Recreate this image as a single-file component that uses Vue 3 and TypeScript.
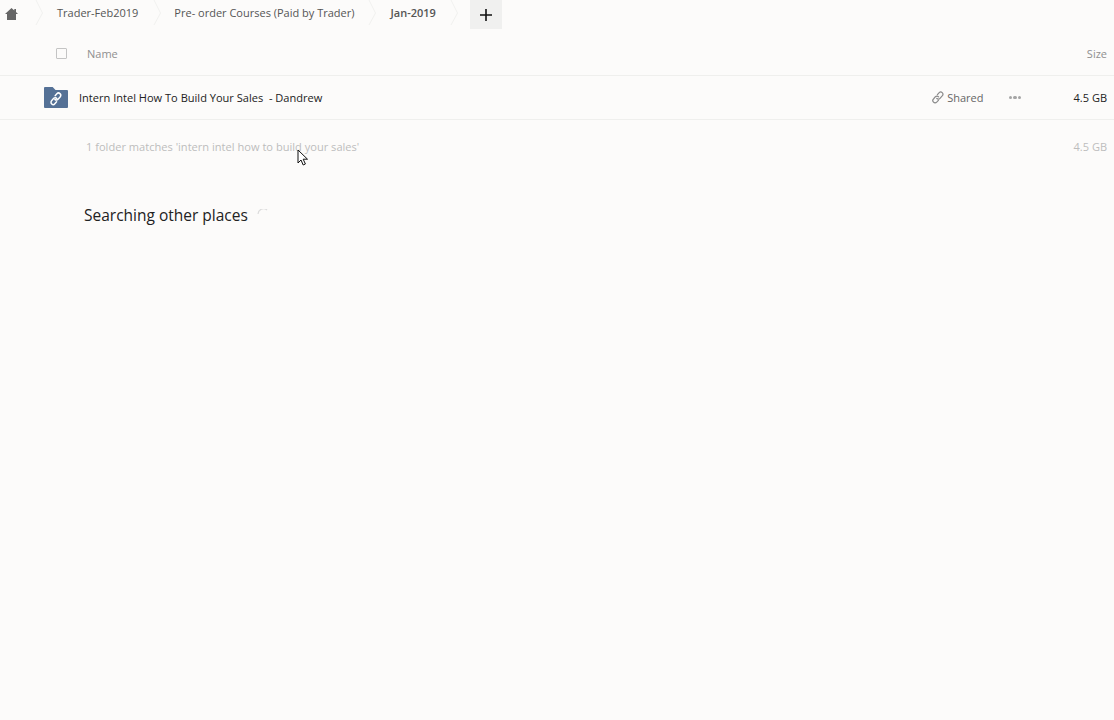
<script setup lang="ts">
const crumbs = [
  { label: 'Trader-Feb2019', cls: 'c1' },
  { label: 'Pre- order Courses (Paid by Trader)', cls: 'c2' },
  { label: 'Jan-2019', cls: 'c3' },
]
</script>

<template>
  <div class="page">
    <nav class="crumbs">
      <div class="home">
        <svg width="13" height="12" viewBox="0 0 13 12"><path d="M6.500 0 0 6h2v6h9V6h2l-2-1.900V1H9.300v1.500z" fill="#666" /></svg>
      </div>
      <svg class="chev" width="10" height="30" viewBox="0 0 10 30"><path d="M1 0 7.500 13 1 25" fill="none" stroke="#f1f1ef" /></svg>
      <template v-for="c in crumbs" :key="c.label">
        <span class="crumb" :class="c.cls">{{ c.label }}</span>
        <svg class="chev" width="10" height="30" viewBox="0 0 10 30"><path d="M1 0 7.500 13 1 25" fill="none" stroke="#f1f1ef" /></svg>
      </template>
      <div class="plus">
        <svg width="12" height="12" viewBox="0 0 12 12"><path d="M6 0v12M0 6h12" stroke="#111" stroke-width="1.6" /></svg>
      </div>
    </nav>

    <div class="head">
      <span class="check"></span>
      <span class="head-name">Name</span>
      <span class="head-size">Size</span>
    </div>

    <div class="row">
      <svg class="folder" width="24" height="21" viewBox="0 0 25 21" preserveAspectRatio="none">
        <path d="M1 0h8l3 3h12a1 1 0 0 1 1 1v16a1 1 0 0 1-1 1H1a1 1 0 0 1-1-1V1a1 1 0 0 1 1-1z" fill="#557196" />
        <g fill="none" stroke="#fff" stroke-width="1.500" stroke-linecap="round">
          <path d="M11.600 8.800l1.800-2a2.300 2.300 0 0 1 3.400 3.100l-2.200 2.400a2.300 2.300 0 0 1-3.300.1" />
          <path d="M13.400 11.400a2.300 2.300 0 0 0-3.300-.1l-2.200 2.400a2.300 2.300 0 0 0 3.400 3.100l1.800-2" />
        </g>
      </svg>
      <span class="file-name">Intern Intel How To Build Your Sales&nbsp; - Dandrew</span>
      <span class="shared">
        <svg width="12" height="13" viewBox="0 0 12 13">
          <g fill="none" stroke="#8a8a8a" stroke-width="1.200" stroke-linecap="round">
            <path d="M5.400 3.600 7.200 1.600a2.200 2.200 0 0 1 3.200 3L8 7.400a2.200 2.200 0 0 1-3.200.1" />
            <path d="M6.600 5.800a2.200 2.200 0 0 0-3.200-.1L1.500 8a2.200 2.200 0 0 0 3.200 3.200l1.700-1.900" />
          </g>
        </svg>
        Shared
      </span>
      <span class="dots"><i></i><i></i><i></i></span>
      <span class="file-size">4.5 GB</span>
    </div>

    <div class="summary">
      <span class="sum-text">1 folder matches 'intern intel how to build your sales'</span>
      <span class="sum-size">4.5 GB</span>
    </div>

    <div class="other">
      <span>Searching other places</span>
      <svg width="11" height="7" viewBox="0 0 11 7"><path d="M1 5A5.500 5.500 0 0 1 10 1" fill="none" stroke="#dcdcdc" stroke-width="1.200" /></svg>
    </div>

    <svg class="cursor" width="12" height="18" viewBox="0 0 12 18">
      <path d="M1 1v13l3-3 2.200 5 2.200-1-2.200-4.800h4.300z" fill="#fff" stroke="#111" stroke-width="1" />
    </svg>
  </div>
</template>

<style scoped>
.page {
  position: relative;
  width: 1114px;
  height: 720px;
  overflow: hidden;
  background: #fcfbfa;
  font-family: "Open Sans", "Noto Sans", sans-serif;
  font-size: 11px;
  color: #222;
}
.crumbs {
  display: flex;
  align-items: flex-start;
  height: 30px;
}
.home {
  width: 35px;
  padding: 8px 0 0 5px;
  box-sizing: border-box;
}
.chev { flex: none; }
.crumb {
  line-height: 26px;
  color: #555;
  font-size: 11px;
  white-space: nowrap;
  margin-right: 14px;
}
.c1 { margin-left: 12px; margin-right: 15px; }
.c2 { margin-left: 11px; }
.c3 { margin-left: 12px; font-weight: 600; color: #555; }
.plus {
  width: 32px;
  height: 29px;
  margin-left: 10px;
  background: #f0f0ef;
  display: flex;
  align-items: center;
  justify-content: center;
}
.head {
  display: flex;
  align-items: center;
  height: 45px;
  border-bottom: 1px solid #efefed;
  color: #8f8f8f;
}
.check {
  width: 9px;
  height: 9px;
  margin-left: 56px;
  margin-top: 2px;
  border: 1px solid #c4c4c4;
  border-radius: 1px;
}
.head-name { margin-left: 20px; margin-top: 1px; }
.head-size { margin-left: auto; margin-right: 7px; margin-top: 1px; }
.row {
  display: flex;
  align-items: center;
  height: 43px;
  border-bottom: 1px solid #efefed;
}
.folder { margin-left: 44px; flex: none; }
.file-name { margin-left: 11px; color: #222; white-space: nowrap; font-size: 11.05px; }
.shared {
  margin-left: auto;
  display: flex;
  align-items: center;
  gap: 3px;
  color: #666;
}
.dots {
  display: flex;
  gap: 1px;
  margin-left: 25px;
}
.dots i {
  width: 3.500px;
  height: 3.500px;
  border-radius: 50%;
  background: #a5a5a5;
}
.file-size {
  width: 70px;
  margin-left: 23px;
  padding-right: 7px;
  box-sizing: border-box;
  text-align: right;
  color: #222;
}
.summary {
  display: flex;
  justify-content: space-between;
  padding: 19px 7px 0 86px;
  color: #bdbdbd;
}
.sum-text { font-size: 11.08px; }
.other {
  display: flex;
  align-items: center;
  gap: 9px;
  margin: 50px 0 0 84px;
  font-size: 15.500px;
  color: #222;
}
.other svg { margin-bottom: 6px; }
.cursor {
  position: absolute;
  left: 297px;
  top: 149px;
}
</style>
